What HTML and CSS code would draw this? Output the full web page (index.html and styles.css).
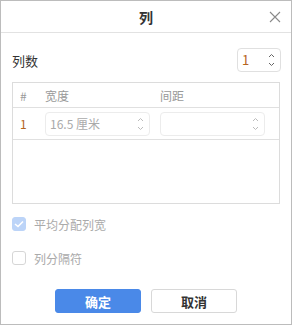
FILE: index.html
```html
<!DOCTYPE html>
<html lang="zh">
<head>
    <meta charset="UTF-8">
    <title>列</title>
    <link rel="stylesheet" href="styles.css">
</head>
<body>
    <div class="dialog">
        <div class="header">
            <div class="title">列</div>
            <svg class="close" width="12" height="12" viewBox="0 0 12 12">
                <path d="M1 1L11 11M11 1L1 11" stroke="#8a8a8a" stroke-width="1.1" fill="none"/>
            </svg>
        </div>
        <div class="body">
            <div class="count-row">
                <span class="label">列数</span>
                <div class="spin count">
                    <span class="value">1</span>
                    <svg class="arrows" width="7" height="16" viewBox="0 0 7 16">
                        <path d="M1 5L3.5 2.5L6 5M1 11L3.5 13.5L6 11" stroke="#666" stroke-width="1" fill="none"/>
                    </svg>
                </div>
            </div>
            <div class="table">
                <div class="thead">
                    <span class="c-num">#</span>
                    <span class="c-width">宽度</span>
                    <span class="c-gap">间距</span>
                </div>
                <div class="trow">
                    <span class="c-num num">1</span>
                    <div class="spin cell">
                        <span class="value">16.5 厘米</span>
                        <svg class="arrows" width="7" height="16" viewBox="0 0 7 16">
                            <path d="M1 5L3.5 2.5L6 5M1 11L3.5 13.5L6 11" stroke="#bbb" stroke-width="1" fill="none"/>
                        </svg>
                    </div>
                    <div class="spin cell">
                        <span class="value"></span>
                        <svg class="arrows" width="7" height="16" viewBox="0 0 7 16">
                            <path d="M1 5L3.5 2.5L6 5M1 11L3.5 13.5L6 11" stroke="#bbb" stroke-width="1" fill="none"/>
                        </svg>
                    </div>
                </div>
            </div>
            <label class="check">
                <span class="box checked">
                    <svg width="10" height="8" viewBox="0 0 10 8"><path d="M1 4L4 6.5L9 1.5" stroke="#fff" stroke-width="1.6" fill="none"/></svg>
                </span>
                <span>平均分配列宽</span>
            </label>
            <label class="check">
                <span class="box"></span>
                <span>列分隔符</span>
            </label>
            <div class="actions">
                <button class="ok">确定</button>
                <button class="cancel">取消</button>
            </div>
        </div>
    </div>
</body>
</html>
```

FILE: styles.css
```css
html, body {
    margin: 0;
    background: #fff;
}
body {
    font-family: "Noto Sans CJK SC", "Noto Sans", sans-serif;
    font-size: 12px;
    color: #333;
}
.dialog {
    width: 292px;
    height: 325px;
    box-sizing: border-box;
    border: 1px solid #bcbcbc;
    display: flex;
    flex-direction: column;
}
.header {
    height: 31px;
    border-bottom: 1px solid #e2e2e2;
    display: flex;
    align-items: center;
    justify-content: center;
    position: relative;
}
.header .title {
    font-size: 14px;
    font-weight: bold;
    color: #333;
}
.header .close {
    position: absolute;
    right: 10px;
    top: 10px;
}
.body {
    padding: 0 11px;
    display: flex;
    flex-direction: column;
}
.count-row {
    display: flex;
    align-items: center;
    justify-content: space-between;
    margin-top: 15px;
}
.count-row .label {
    font-size: 13px;
}
.spin {
    box-sizing: border-box;
    height: 24px;
    border: 1px solid #e0e0e0;
    border-radius: 4px;
    display: flex;
    align-items: center;
    justify-content: space-between;
    padding: 0 5px 0 4px;
}
.spin .value {
    font-size: 12px;
    line-height: 16px;
}
.spin.count {
    width: 44px;
    margin-right: -1px;
}
.spin.count .value {
    color: #b5651d;
    font-size: 13px;
}
.table {
    margin-top: 10px;
    height: 122px;
    box-sizing: border-box;
    border: 1px solid #dcdcdc;
}
.thead {
    height: 24px;
    border-bottom: 1px solid #e0e0e0;
    display: flex;
    align-items: center;
    color: #999;
}
.trow {
    height: 31px;
    border-bottom: 1px solid #e0e0e0;
    display: flex;
    align-items: center;
}
.c-num {
    width: 32px;
    padding-left: 7px;
    box-sizing: border-box;
}
.num {
    color: #b5651d;
}
.c-width {
    width: 115px;
}
.spin.cell {
    width: 105px;
    margin-right: 10px;
    border-color: #ececec;
}
.spin.cell .value {
    color: #aaa;
}
.check {
    display: flex;
    align-items: center;
    gap: 8px;
    color: #aaa;
    height: 14px;
    margin-top: 13px;
}
.check + .check {
    margin-top: 20px;
}
.box {
    width: 14px;
    height: 14px;
    box-sizing: border-box;
    border: 1px solid #d6d6d6;
    border-radius: 3px;
    display: flex;
    align-items: center;
    justify-content: center;
}
.box.checked {
    background: #bcd4f8;
    border-color: #bcd4f8;
}
.actions {
    display: flex;
    justify-content: center;
    gap: 10px;
    margin-top: 24px;
}
.actions button {
    width: 86px;
    height: 24px;
    border-radius: 3px;
    font-family: inherit;
    font-size: 13px;
    font-weight: bold;
    cursor: pointer;
}
.actions .ok {
    background: #4a89e8;
    border: 1px solid #4a89e8;
    color: #fff;
}
.actions .cancel {
    background: #fff;
    border: 1px solid #d8d8d8;
    color: #333;
}
```
